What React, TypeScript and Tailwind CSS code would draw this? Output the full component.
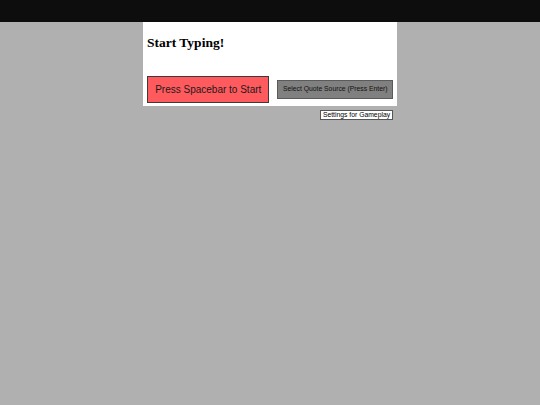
export default function App() {
  return (
    <div className="min-h-[405px] bg-[#b0b0b0] font-['Liberation_Sans',Arial,sans-serif]">
      <div className="h-[22px] bg-[#0d0d0d]" />

      <div className="mx-auto flex h-[84px] w-[254px] flex-col bg-white px-[4px] pb-[3px]">
        <h1 className="pt-[12.5px] font-['Liberation_Serif','Times_New_Roman',serif] text-[13.5px] font-bold leading-[16px] text-black">
          Start Typing!
        </h1>
        <div className="mt-auto flex items-center">
          <button className="flex h-[27px] w-[123px] items-center justify-center border border-[#3a3a3a] bg-[#ff5a5e] text-[10px] text-[#1a1a1a]">
            Press Spacebar to Start
          </button>
          <button className="ml-[8px] flex h-[19px] w-[116px] items-center justify-center border border-[#5a5a5a] bg-[#808080] text-[6.8px] text-[#111]">
            Select Quote Source (Press Enter)
          </button>
        </div>
      </div>

      <div className="mx-auto flex w-[254px] justify-end pr-[4px] pt-[4px]">
        <button className="flex h-[10px] w-[73px] items-center justify-center border border-[#555] bg-white text-[6.8px] leading-none text-black">
          Settings for Gameplay
        </button>
      </div>
    </div>
  );
}
